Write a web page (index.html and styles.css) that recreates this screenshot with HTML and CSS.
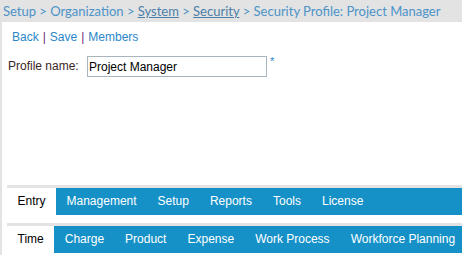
FILE: index.html
```html
<!DOCTYPE html>
<html lang="en">
<head>
  <meta charset="UTF-8">
  <title>Security Profile: Project Manager</title>
  <link rel="stylesheet" href="styles.css">
</head>
<body>
  <!-- Breadcrumb header -->
  <div class="crumbs">
    <span>Setup</span> &gt; <span>Organization</span> &gt; <a href="#">System</a> &gt; <a href="#">Security</a> &gt; <span>Security Profile: Project Manager</span>
  </div>

  <div class="page">
    <div class="actions">
      <a href="#">Back</a><span class="sep">|</span><a href="#">Save</a><span class="sep">|</span><a href="#">Members</a>
    </div>

    <div class="field">
      <label for="profileName">Profile name:</label>
      <input type="text" id="profileName" value="Project Manager">
      <span class="req">*</span>
    </div>

    <!-- Tab bars -->
    <div class="tabs">
      <div class="tabbar">
        <span class="tab active">Entry</span>
        <span class="tab">Management</span>
        <span class="tab">Setup</span>
        <span class="tab">Reports</span>
        <span class="tab">Tools</span>
        <span class="tab">License</span>
      </div>
      <div class="tabbar">
        <span class="tab active">Time</span>
        <span class="tab">Charge</span>
        <span class="tab">Product</span>
        <span class="tab">Expense</span>
        <span class="tab">Work Process</span>
        <span class="tab">Workforce Planning</span>
      </div>
    </div>
  </div>
</body>
</html>
```

FILE: styles.css
```css
body {
  margin: 0;
  font-family: "Liberation Sans", Arial, sans-serif;
  font-size: 12px;
  background-color: #fff;
}

.crumbs {
  height: 22px;
  line-height: 23px;
  padding-left: 3px;
  background-color: #e3e3e3;
  font-family: Lato, sans-serif;
  font-size: 13px;
  color: #4b93c9;
  white-space: nowrap;
  overflow: hidden;
}

.crumbs a {
  color: #4b7fa9;
  text-decoration: underline;
}

.page {
  border-left: 2px solid #e3e3e3;
  height: 233px;
  padding-left: 5px;
  display: flex;
  flex-direction: column;
}

.actions {
  padding: 8px 0 0 5px;
  height: 18px;
  line-height: 15px;
}

.actions a {
  color: #2a86c8;
  text-decoration: none;
}

.sep {
  color: #6a2a7a;
  margin: 0 4px;
}

.field {
  display: flex;
  align-items: flex-start;
  margin-top: 8px;
  margin-left: 1px;
}

.field label {
  color: #3a2424;
  line-height: 21px;
  width: 79px;
}

.field input {
  width: 176px;
  height: 15px;
  padding: 2px 1px;
  border: 1px solid #a9b5bd;
  font-family: "Liberation Sans", Arial, sans-serif;
  font-size: 12px;
  color: #000;
  margin: 0;
}

.req {
  color: #2a86c8;
  margin-left: 3px;
  font-size: 11px;
  line-height: 11px;
}

.tabs {
  margin-top: auto;
  margin-bottom: 2px;
}

.tabbar {
  display: flex;
  border-top: 3px solid #e3e3e3;
  background-color: #1591c8;
  height: 27px;
}

.tabbar + .tabbar {
  margin-top: 8px;
}

.tab {
  padding: 0 10.5px;
  line-height: 27px;
  color: #fff;
  white-space: nowrap;
}

.tab.active {
  background-color: #fff;
  color: #000;
}
```
